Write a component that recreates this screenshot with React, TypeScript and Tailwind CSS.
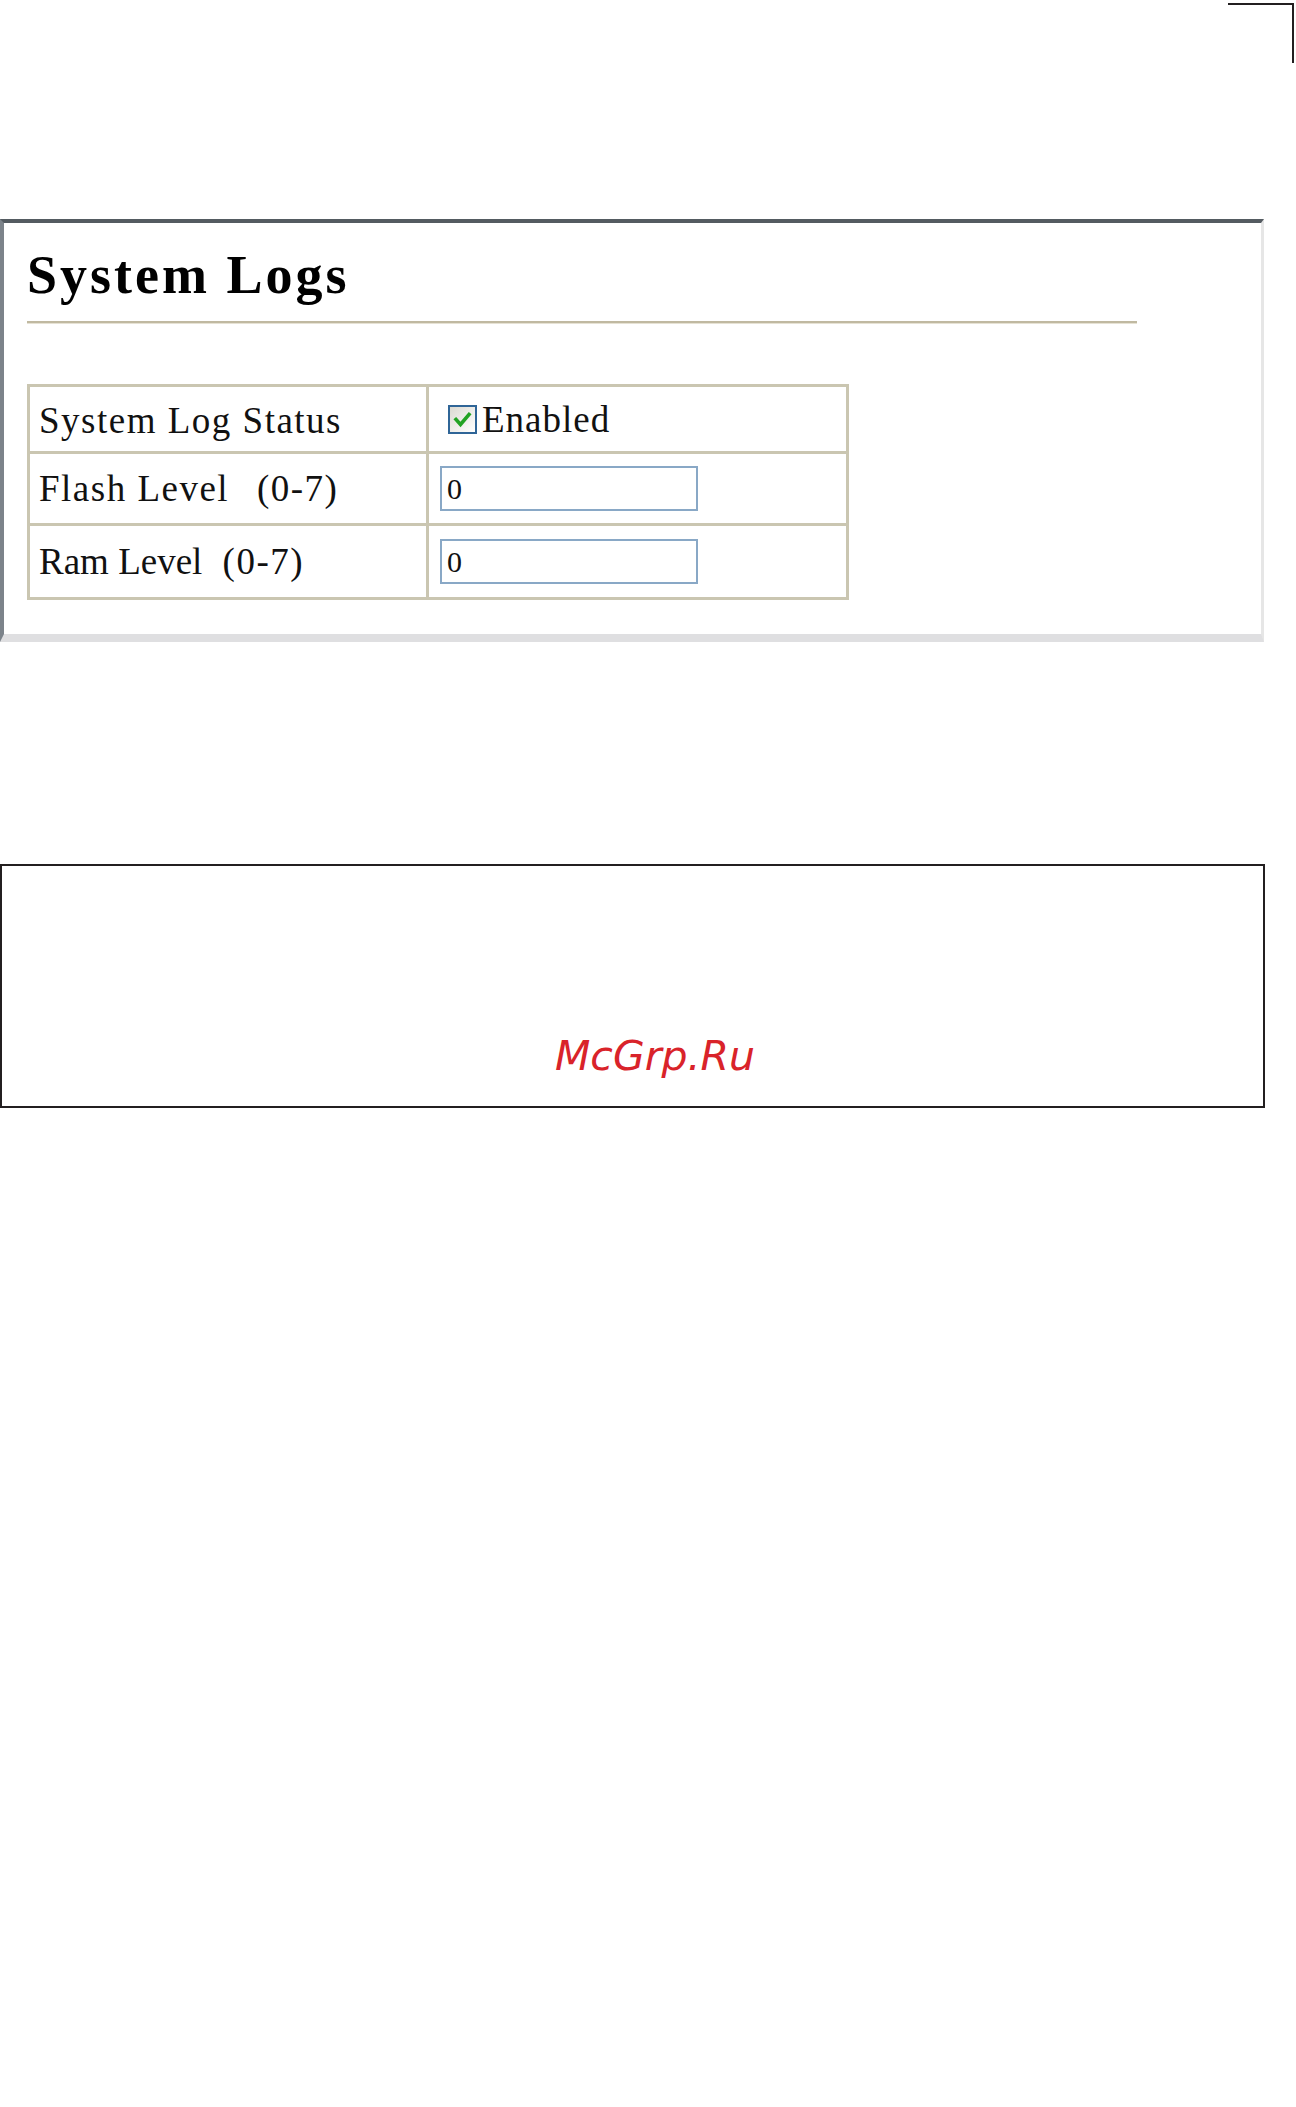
import { useState } from 'react';

const serif = "font-['Liberation_Serif','Times_New_Roman',serif]";

interface LevelRowProps {
  name: string;
  tracking: string;
  gap: string;
  value: string;
  onChange: (v: string) => void;
  height: string;
  last?: boolean;
}

// One "xxx Level (0-7)" row with its text box
function LevelRow({ name, tracking, gap, value, onChange, height, last }: LevelRowProps) {
  return (
    <div className={`flex ${height} ${last ? '' : 'border-b-[3px] border-b-[#cac6b1]'}`}>
      <div className="w-[399px] flex items-center pl-[9px] border-r-[3px] border-r-[#cac6b1]">
        <span className={`${serif} text-[37px] leading-none ${tracking} text-[#111]`}>
          {name} <span className={`${gap} tracking-[1.5px]`}>(0-7)</span>
        </span>
      </div>
      <div className="flex-1 flex items-center pl-[11px]">
        <input
          type="text"
          value={value}
          onChange={(e) => onChange(e.target.value)}
          className={`${serif} w-[258px] h-[45px] border-2 border-[#89a8c6] bg-white px-[5px] text-[30px] leading-none text-[#111] outline-none`}
        />
      </div>
    </div>
  );
}

export default function App() {
  const [enabled, setEnabled] = useState(true);
  const [flashLevel, setFlashLevel] = useState('0');
  const [ramLevel, setRamLevel] = useState('0');

  return (
    <div className="min-h-[2107px] bg-white">
      {/* Corner crop mark */}
      <div className="flex justify-end pt-[3px] pr-[2px]">
        <div className="w-[66px] h-[60px] border-t-2 border-r-2 border-[#231f20]" />
      </div>

      {/* System Logs panel */}
      <div className="mt-[156px] w-[1264px] bg-white border-t-4 border-t-[#545b61] border-l-4 border-l-[#7c838a] border-r-[3px] border-r-[#e6e6e6] border-b-[8px] border-b-[#dfdfe1] pl-[23px] pt-[25px] pb-[34px]">
        <h1 className={`${serif} text-[54px] leading-[54px] font-bold tracking-[3px] text-black`}>System Logs</h1>
        <div className="mt-[19px] w-[1110px] border-t-2 border-t-[#c0b9a1] border-b border-b-[#e6e2d4]" />

        {/* Settings table */}
        <div className="mt-[60px] w-[822px] border-[3px] border-[#cac6b1]">
          <div className="flex h-[67px] border-b-[3px] border-b-[#cac6b1]">
            <div className="w-[399px] flex items-center pl-[9px] pt-[2px] border-r-[3px] border-r-[#cac6b1]">
              <span className={`${serif} text-[37px] leading-none tracking-[1.5px] text-[#111]`}>System Log Status</span>
            </div>
            <div className="flex-1 flex items-center pl-[19px]">
              <button
                onClick={() => setEnabled(!enabled)}
                className="w-[29px] h-[29px] border-2 border-[#2f6597] bg-linear-to-br from-[#dcdad2] to-white flex items-center justify-center"
              >
                {enabled && (
                  <svg viewBox="0 0 25 25" className="w-[25px] h-[25px]">
                    <path d="M6 12.5 L10.5 17.5 L19 7.5" fill="none" stroke="#22a323" strokeWidth="3.6" strokeLinecap="square" />
                  </svg>
                )}
              </button>
              <span className={`${serif} ml-[5px] text-[37px] leading-none tracking-[1px] text-[#111]`}>Enabled</span>
            </div>
          </div>
          <LevelRow name="Flash Level" tracking="tracking-[1.5px]" gap="ml-[17px]" value={flashLevel} onChange={setFlashLevel} height="h-[72px]" />
          <LevelRow name="Ram Level" tracking="tracking-[0px]" gap="ml-[11px]" value={ramLevel} onChange={setRamLevel} height="h-[71px]" last />
        </div>
      </div>

      {/* Footer box */}
      <div className="mt-[222px] w-[1265px] h-[244px] border-2 border-[#231f20] pt-[170px] pl-[553px]">
        <span className="font-['DejaVu_Sans',sans-serif] italic text-[41px] leading-[40px] text-[#d9232a]">McGrp.Ru</span>
      </div>
    </div>
  );
}
